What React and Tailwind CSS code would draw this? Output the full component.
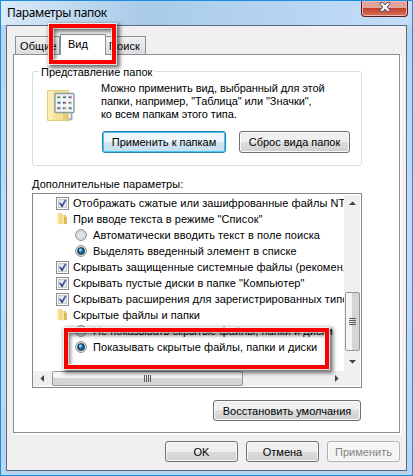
import * as React from "react";
import clsx from "clsx";

const rows = [
  { type: "check", text: "Отображать сжатые или зашифрованные файлы NTF" },
  { type: "folder", text: "При вводе текста в режиме \"Список\"" },
  { type: "radio", text: "Автоматически вводить текст в поле поиска" },
  { type: "radio", on: true, text: "Выделять введенный элемент в списке" },
  { type: "check", text: "Скрывать защищенные системные файлы (рекомен," },
  { type: "check", text: "Скрывать пустые диски в папке \"Компьютер\"" },
  { type: "check", text: "Скрывать расширения для зарегистрированных типо" },
  { type: "folder", text: "Скрытые файлы и папки" },
  { type: "radio", text: "Не показывать скрытые файлы, папки и диски" },
  { type: "radio", on: true, text: "Показывать скрытые файлы, папки и диски" },
];

function CheckIcon() {
  return (
    <svg width="13" height="13" viewBox="0 0 13 13">
      <rect x=".5" y=".5" width="12" height="12" fill="#fbfbfb" stroke="#8e8f8f" />
      <rect x="2.5" y="2.5" width="8" height="8" fill="#e3e6ea" stroke="#c5cbd3" />
      <path d="M3 6l1.4-.6L6 7.6 9.1 2.4l1.3.7L6.6 10H5.4z" fill="#35519b" />
    </svg>
  );
}

function RadioIcon({ on }) {
  return (
    <svg width="12" height="12" viewBox="0 0 12 12">
      <circle cx="6" cy="6" r="5.4" fill="#f6f6f6" stroke="#858787" />
      <circle cx="6" cy="6" r="4" fill="#e2e4e6" stroke="#bfc4c9" strokeWidth=".8" />
      {on && <circle cx="6" cy="6" r="3.2" fill="#1c6c9f" stroke="#12304f" strokeWidth="1.1" />}
      {on && <circle cx="5.4" cy="5" r="1.4" fill="#8be0fa" />}
    </svg>
  );
}

function FolderIcon() {
  return (
    <svg width="12" height="14" viewBox="0 0 12 14">
      <path d="M1 1h5v11H1z" fill="#efd98a" />
      <path d="M1 1h2v11H1z" fill="#f7e9b0" />
      <path d="M5 3h5v9H5z" fill="#e8cc72" />
      <path d="M5.5 3.5L8 2v10l-2.5 1z" fill="#f6e5a0" />
      <path d="M8 5h3v7H8z" fill="#dcbb58" />
    </svg>
  );
}

function ViewIcon() {
  return (
    <svg width="30" height="32" viewBox="0 0 30 32">
      <path d="M.5.5h21v30H.5z" fill="#f4e295" stroke="#e2ca7c" />
      <path d="M1 1h5v29H1z" fill="#f9eeb5" />
      <path d="M16 22h6v7l-4 2h-2z" fill="#e4cd7a" />
      <path d="M24.5 23v6l-3 1" stroke="#9fb1bd" strokeWidth="2" fill="none" />
      <rect x="8" y="3.5" width="19" height="19" rx="1" fill="#fafcfd" stroke="#8e9ba4" strokeWidth="1.4" />
      {[0, 1, 2].map((r) =>
        [0, 1, 2].map((c) => (
          <g key={`${r}${c}`}>
            <rect x={9.6 + c * 5.6} y={5 + r * 5.5} width="4.6" height="4.6" fill="#e6eaed" />
            <rect x={10.4 + c * 5.6} y={6.4 + r * 5.5} width="1.6" height="1.7" fill={["#2e76a8", "#3f8a59", "#35539c"][(r + c) % 3]} />
            <rect x={12 + c * 5.6} y={6.4 + r * 5.5} width="1.4" height="1.7" fill={["#d19137", "#425b86", "#bd4c3a"][(r + c) % 3]} />
          </g>
        ))
      )}
    </svg>
  );
}

function Arrow({ d }) {
  return (
    <svg width="7" height="7" viewBox="0 0 7 7">
      <path d={d} fill="#404040" />
    </svg>
  );
}

function Button({ children, className, primary, disabled }) {
  return (
    <button
      className={clsx(
        "flex items-center justify-center rounded-[3px] border whitespace-nowrap",
        primary
          ? "border-[#2b7fa5] bg-linear-to-b from-[#eef6fb] from-50% via-[#d3e5f1] via-50% to-[#c6dfee] inset-ring inset-ring-[#41c8f5]"
          : disabled
            ? "border-[#adb2b5] bg-[#f4f4f4] text-[#838383] inset-ring inset-ring-[#fcfcfc]"
            : "border-[#707070] bg-linear-to-b from-[#efefef] from-50% via-[#dddddd] via-50% to-[#d0d0d0] inset-ring inset-ring-[#f9f9f9]",
        className
      )}
    >
      {children}
    </button>
  );
}

function Row({ type, on, text }) {
  return (
    <div className={clsx("flex h-4 items-center whitespace-nowrap", type === "radio" ? "pl-[42px]" : "pl-[23px]")}>
      <span className={clsx("flex shrink-0", type === "radio" ? "w-[18px]" : "w-[17px]")}>
        {type === "check" && <CheckIcon />}
        {type === "folder" && <FolderIcon />}
        {type === "radio" && <RadioIcon on={on} />}
      </span>
      <span className="tracking-[0.06px]">{text}</span>
    </div>
  );
}

function Frame({ className }) {
  return (
    <div
      className={clsx(
        "absolute z-10 border-4 border-[#fa0000] shadow-[0_0_0_1px_rgba(255,255,255,.75),2px_2px_4px_2px_rgba(0,0,0,.55),inset_0_0_0_1px_rgba(255,255,255,.6),inset_2px_3px_4px_rgba(0,0,0,.6)]",
        className
      )}
    />
  );
}

export default function App() {
  return (
    <div className="relative flex h-[476px] w-[413px] flex-col overflow-hidden border border-[#1a8ddc] bg-linear-to-b from-[#b4d3ef] via-[#c3dcf8] to-[#b7d4f2] px-[5px] pb-[4px] font-['Liberation_Sans',Arial,sans-serif] text-[11px] leading-4 text-black">
      {/* title bar */}
      <header className="-mx-[5px] flex h-[24px] shrink-0 justify-between bg-linear-to-r from-[#d9e9f7] via-[#a9cbea] via-35% to-[#c3ddfa] pr-1 pl-[6px]">
        <h1 className="pt-[3px] font-['Noto_Sans','Open_Sans',sans-serif] text-[12px] leading-[17px] tracking-[-0.35px]">Параметры папок</h1>
        <button className="flex h-[16px] w-[47px] items-center justify-center rounded-b-[4px] border border-t-0 border-[#5b1c1d] bg-linear-to-b from-[#dfa49b] from-45% via-[#c2402c] via-50% to-[#d8705b] pb-[3px] inset-ring inset-ring-[#edb9af]">
          <svg width="12" height="10" viewBox="0 0 12 10">
            <path d="M1 .7h3.2L6 2.9 7.8.7H11v1L8.2 5 11 8.3v1H7.8L6 7.1 4.2 9.3H1v-1L3.8 5 1 1.7z" fill="#f8f8f8" stroke="#535666" strokeWidth="1" />
          </svg>
        </button>
      </header>

      <main className="flex min-h-0 flex-1 flex-col border border-[#5b6b80] bg-[#f0f0f0] pr-[7px] pl-[6px]">
        {/* tabs */}
        <div className="flex h-[28px] shrink-0 items-end pl-[2px]">
          <div className="h-[18px] w-[45px] border border-b-0 border-[#8c8e99] bg-linear-to-b from-[#f2f2f2] to-[#dcdcdc] pl-[4px] leading-[18px] tracking-[0.1px]">Общие</div>
          <div className="z-1 -mb-px h-[21px] w-[46px] border border-b-0 border-[#8c8e99] bg-white pl-[7px] leading-[19px]">Вид</div>
          <div className="h-[18px] w-[40px] border border-b-0 border-l-0 border-[#8c8e99] bg-linear-to-b from-[#f2f2f2] to-[#dcdcdc] pl-[3px] leading-[18px] tracking-[0.1px]">Поиск</div>
        </div>

        <section className="flex h-[379px] w-[387px] shrink-0 flex-col border border-[#8c8e99] bg-white pt-[16px] pl-[18px] shadow-[2px_2px_0_#fbfbfb]">
          <fieldset className="relative h-[95px] w-[330px] shrink-0 rounded-[3px] border border-[#d5dfe5]">
            <span className="absolute -top-[8px] left-[6px] bg-white px-[2px]">Представление папок</span>
            <div className="flex h-[57px] pt-[10px] pl-[14px]">
              <div className="w-[54px] pt-[8px]"><ViewIcon /></div>
              <p className="leading-[13px] tracking-[-0.07px] whitespace-nowrap">
                Можно применить вид, выбранный для этой<br />
                папки, например, "Таблица" или "Значки",<br />
                ко всем папкам этого типа.
              </p>
            </div>
            <div className="flex gap-[13px] pt-[2px] pl-[69px]">
              <Button primary className="h-[22px] w-[124px]">Применить к папкам</Button>
              <Button className="h-[22px] w-[111px]">Сброс вида папок</Button>
            </div>
          </fieldset>

          <div className="mt-[10px] h-[18px] shrink-0 tracking-[0.06px]">Дополнительные параметры:</div>

          <div className="-mt-px flex h-[195px] w-[330px] shrink-0 flex-col border border-[#828790] bg-white">
            <div className="flex h-[177px]">
              <div className="w-[311px] overflow-hidden pt-px">
                {rows.map((r) => <Row key={r.text} {...r} />)}
              </div>
              <div className="mt-px flex w-[16px] flex-col items-center bg-[#efefef]">
                <div className="flex h-[16px] items-center"><Arrow d="M0 5L3.5 1.5 7 5z" /></div>
                <div className="mt-[81px] flex h-[59px] w-[15px] flex-col items-center justify-center gap-px rounded-[2px] border border-[#979797] bg-linear-to-r from-[#f5f5f5] from-50% to-[#d5d5d5] to-50%">
                  {[0, 1, 2, 3].map((i) => <i key={i} className="h-px w-[7px] bg-[#5e5e5e]" />)}
                </div>
                <div className="flex h-[20px] items-center"><Arrow d="M0 2h7L3.5 5.5z" /></div>
              </div>
            </div>
            <div className="flex h-[15px] w-[327px] items-center bg-[#efefef]">
              <div className="flex w-[19px] justify-center"><Arrow d="M5 0v7L1.5 3.5z" /></div>
              <div className="flex h-[15px] w-[191px] items-center justify-center gap-px rounded-[2px] border border-[#979797] bg-linear-to-b from-[#f5f5f5] from-50% to-[#d5d5d5] to-50%">
                {[0, 1, 2, 3].map((i) => <i key={i} className="h-[7px] w-px bg-[#5e5e5e]" />)}
              </div>
              <div className="ml-auto pr-[20px]"><Arrow d="M2 0l3.5 3.5L2 7z" /></div>
            </div>
          </div>

          <div className="flex w-[329px] justify-end pt-[12px]">
            <Button className="h-[21px] w-[148px]">Восстановить умолчания</Button>
          </div>
        </section>

        {/* dialog buttons */}
        <footer className="-mr-px flex justify-end gap-[8px] pt-[8px]">
          <Button className="h-[21px] w-[73px]">OK</Button>
          <Button className="h-[21px] w-[73px]">Отмена</Button>
          <Button disabled className="h-[21px] w-[73px]">Применить</Button>
        </footer>
      </main>

      {/* highlight frames */}
      <Frame className="top-[23px] left-[48px] h-[40px] w-[67px]" />
      <Frame className="top-[327px] left-[63px] h-[41px] w-[265px]" />
    </div>
  );
}
